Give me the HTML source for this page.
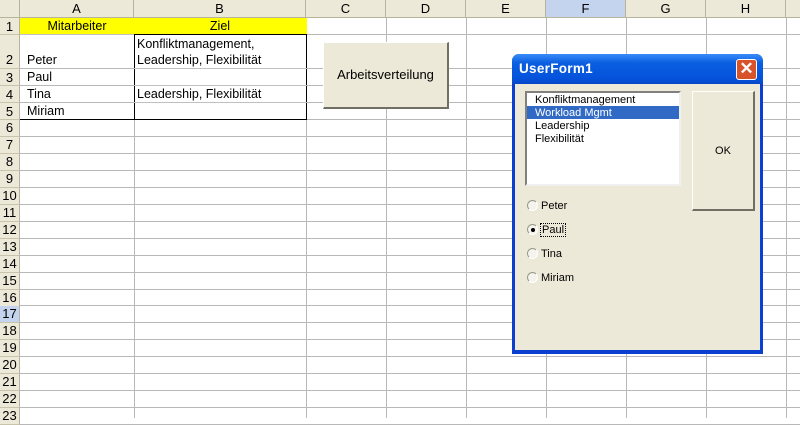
<!DOCTYPE html>
<html><head><meta charset="utf-8"><style>
*{margin:0;padding:0;box-sizing:border-box}
body{width:800px;height:418px;overflow:hidden;background:#fff;font-family:"Liberation Sans",Arial,sans-serif;font-size:12px;position:relative}
.a{position:absolute}
.ch{position:absolute;top:0;height:18px;background:#ece9d8;border-right:1px solid #b8b49c;border-bottom:1px solid #b8b49c;text-align:center;line-height:18px;font-size:13px;color:#000}
.rh{position:absolute;left:0;width:20px;background:#ece9d8;border-right:1px solid #b8b49c;border-bottom:1px solid #c8c4ac;text-align:center;font-size:13px}
.vl{position:absolute;top:18px;bottom:0;width:1px;background:#b8b8b8}
.hl{position:absolute;left:20px;right:0;height:1px;background:#b8b8b8}
.t{position:absolute;font-size:12.5px;white-space:nowrap}
.rad{position:absolute;width:11px;height:11px;border-radius:50%;border:1px solid #9a9888;border-right-color:#fff;border-bottom-color:#fff;background:#f4f3ee}
</style></head><body>
<div class="ch" style="left:0;width:20px"></div>
<div class="ch" style="left:20px;width:114px">A</div>
<div class="ch" style="left:134px;width:172px">B</div>
<div class="ch" style="left:306px;width:80px">C</div>
<div class="ch" style="left:386px;width:80px">D</div>
<div class="ch" style="left:466px;width:80px">E</div>
<div class="ch" style="left:546px;width:80px;background:#c4d4ee">F</div>
<div class="ch" style="left:626px;width:80px">G</div>
<div class="ch" style="left:706px;width:80px">H</div>
<div class="ch" style="left:786px;width:20px"></div>

<div class="vl" style="left:134px"></div><div class="vl" style="left:306px"></div><div class="vl" style="left:386px"></div><div class="vl" style="left:466px"></div><div class="vl" style="left:546px"></div><div class="vl" style="left:626px"></div><div class="vl" style="left:706px"></div><div class="vl" style="left:786px"></div>

<div id="rows"></div>
<script>
var tops=[18,35,69,86,103,120];for(var i=6;i<=23;i++)tops.push(120+(i-5)*16.95);
var h='';
for(var r=1;r<=23;r++){var t=tops[r-1],b=tops[r];
h+='<div class="hl" style="top:'+(b-1).toFixed(0)+'px"></div>';
h+='<div class="rh" style="top:'+t.toFixed(0)+'px;height:'+(b-t).toFixed(0)+'px;line-height:'+(r==2?50:(b-t))+'px;'+(r==17?'background:#c4d4ee;':'')+'">'+r+'</div>';}
document.getElementById('rows').innerHTML=h;
</script>

<div class="a" style="left:20px;top:18px;width:287px;height:17px;background:#ffff00;border-bottom:1px solid #c0c0c0"></div>
<div class="t" style="left:20px;width:114px;top:19px;text-align:center">Mitarbeiter</div>
<div class="t" style="left:134px;width:172px;top:19px;text-align:center">Ziel</div>
<div class="a" style="left:134px;top:34px;width:173px;height:86px;border:1px solid #000"></div>
<div class="a" style="left:20px;top:119px;width:115px;height:1px;background:#000"></div>
<div class="a" style="left:134px;top:68px;width:173px;height:1px;background:#c0c0c0"></div>
<div class="a" style="left:134px;top:85px;width:173px;height:1px;background:#c0c0c0"></div>
<div class="a" style="left:134px;top:102px;width:173px;height:1px;background:#c0c0c0"></div>
<div class="t" style="left:137px;top:37px">Konfliktmanagement,</div>
<div class="t" style="left:137px;top:53px">Leadership, Flexibilität</div>
<div class="t" style="left:27px;top:53px">Peter</div>
<div class="t" style="left:27px;top:70px">Paul</div>
<div class="t" style="left:27px;top:87px">Tina</div>
<div class="t" style="left:137px;top:87px">Leadership, Flexibilität</div>
<div class="t" style="left:27px;top:104px">Miriam</div>

<div class="a" style="left:323px;top:42px;width:126px;height:67px;background:#ece9d8;border:1px solid #fff;border-right:2px solid #716f64;border-bottom:2px solid #716f64;text-align:center;line-height:64px;font-size:13px">Arbeitsverteilung</div>

<div class="a" style="left:512px;top:54px;width:251px;height:300px;background:#0a3fd0;border-radius:7px 7px 0 0;padding:0 4px 4px 4px">
 <div class="a" style="left:0;top:0;width:251px;height:30px;border-radius:7px 7px 0 0;background:linear-gradient(#3a8cf8,#0a5ee0 30%,#0553dc 80%,#0747c8)"></div>
 <div class="a" style="left:7px;top:7px;color:#fff;font-weight:bold;font-size:13.5px;letter-spacing:.3px">UserForm1</div>
 <div class="a" style="left:224px;top:5px;width:21px;height:21px;border:1px solid #fff;border-radius:3px;background:#d8532a;color:#fff;text-align:center;line-height:18px;font-size:17px;font-weight:bold">✕</div>
 <div class="a" style="left:3px;top:30px;width:245px;height:266px;background:#ece9d8"></div>
 <div class="a" style="left:13px;top:37px;width:156px;height:95px;background:#fff;border:2px solid #808080;border-right-color:#f0f0f0;border-bottom-color:#f0f0f0"></div>
 <div class="a" style="left:15px;top:52px;width:152px;height:13px;background:#316ac5"></div>
 <div class="t" style="left:23px;top:40px;font-size:11px;line-height:13px">Konfliktmanagement<br><span style="color:#fff">Workload Mgmt</span><br>Leadership<br>Flexibilität</div>
 <div class="a" style="left:180px;top:37px;width:63px;height:120px;border:1px solid #fff;border-right:2px solid #716f64;border-bottom:2px solid #716f64;text-align:center;line-height:118px;font-size:11px">OK</div>
 <div class="rad" style="left:15px;top:146px"></div><div class="t" style="left:29px;top:146px;font-size:11px">Peter</div>
 <div class="rad" style="left:15px;top:170px"></div><div class="a" style="left:19px;top:174px;width:4px;height:4px;border-radius:50%;background:#000"></div><div class="t" style="left:28px;top:169px;font-size:11px;border:1px dotted #000;padding:0 1px">Paul</div>
 <div class="rad" style="left:15px;top:194px"></div><div class="t" style="left:29px;top:194px;font-size:11px">Tina</div>
 <div class="rad" style="left:15px;top:218px"></div><div class="t" style="left:29px;top:218px;font-size:11px">Miriam</div>
</div>
</body></html>
